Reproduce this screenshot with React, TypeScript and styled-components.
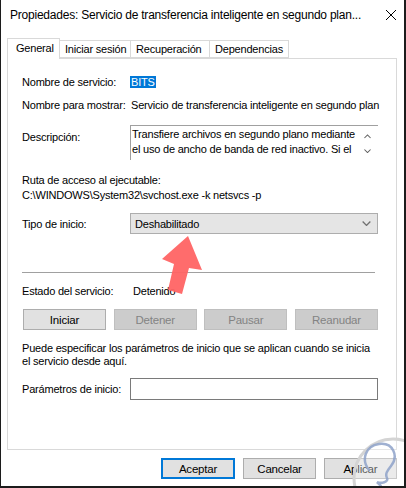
import React from "react";
import styled, { createGlobalStyle } from "styled-components";

const Global = createGlobalStyle`
  html, body { margin: 0; padding: 0; background: #fff; }
  * { box-sizing: border-box; }
`;

const Win = styled.div`
  position: relative;
  width: 406px;
  height: 488px;
  background: #fff;
  border-left: 1px solid #1c1c1c;
  border-right: 2px solid #1c1c1c;
  border-bottom: 2px solid #1c1c1c;
  font-family: "Liberation Sans", Arial, sans-serif;
  font-size: 11px;
  letter-spacing: -0.2px;
  color: #000;
  overflow: hidden;
  display: flex;
  flex-direction: column;
`;

const TitleBar = styled.div`
  height: 38px;
  display: flex;
  align-items: flex-start;
  padding: 8px 0 0 9px;
`;

const TitleText = styled.div`
  width: 375px;
  flex: none;
  font-size: 12px;
  letter-spacing: -0.22px;
  line-height: 14px;
  white-space: nowrap;
  overflow: hidden;
`;

const Close = styled.div`
  flex: none;
  width: 12px;
  height: 12px;
  margin-top: 1px;
`;

const TabStrip = styled.div`
  display: flex;
  align-items: flex-end;
  height: 20px;
  margin-left: 6px;
  position: relative;
  z-index: 2;
`;

const Tab = styled.div<{ $w: number; $active?: boolean }>`
  width: ${(p) => p.$w}px;
  height: ${(p) => (p.$active ? 21 : 18)}px;
  margin-bottom: ${(p) => (p.$active ? -1 : 0)}px;
  margin-left: ${(p) => (p.$active ? 0 : -1)}px;
  border: 1px solid #d9d9d9;
  border-bottom: ${(p) => (p.$active ? "none" : "1px solid #d9d9d9")};
  background: #fff;
  display: flex;
  align-items: ${(p) => (p.$active ? "flex-start" : "center")};
  padding: ${(p) => (p.$active ? "3px 0 0 8px" : "0 0 0 5px")};
  line-height: 13px;
  white-space: nowrap;
  z-index: ${(p) => (p.$active ? 2 : 1)};
`;

const Panel = styled.div`
  margin: 0 7px 0 6px;
  height: 392px;
  border: 1px solid #d9d9d9;
  padding: 16px 18px 0 14px;
  display: flex;
  flex-direction: column;
`;

const Row = styled.div<{ $mt: number; $h?: number; $align?: string }>`
  display: flex;
  align-items: ${(p) => p.$align || "center"};
  margin-top: ${(p) => p.$mt}px;
  ${(p) => (p.$h ? `height: ${p.$h}px;` : "")}
  line-height: 14px;
  white-space: nowrap;
`;

const Label = styled.div<{ $pt?: number }>`
  width: 108px;
  flex: none;
  ${(p) => (p.$pt ? `padding-top: ${p.$pt}px;` : "")}
`;

const Value = styled.div<{ $ml?: number }>`
  margin-left: ${(p) => p.$ml || 1}px;
`;

const Selected = styled.span`
  background: #0078d7;
  color: #fff;
  padding: 0 1px;
  margin-left: -1px;
`;

const TextBox = styled.div`
  position: relative;
  width: 248px;
  height: 35px;
  border-top: 1px solid #a0a0a0;
  border-left: 1px solid #a0a0a0;
  padding: 1px 0 0 1px;
  line-height: 15px;
`;

const ScrollArrows = styled.div`
  position: absolute;
  right: 7px;
  top: 8px;
  display: flex;
  flex-direction: column;
  gap: 10px;
`;

const Combo = styled.div`
  width: 248px;
  height: 21px;
  background: #e5e5e5;
  border: 1px solid #adadad;
  display: flex;
  align-items: center;
  justify-content: space-between;
  padding: 0 6px 0 4px;
`;

const Sep = styled.div`
  margin-top: 38px;
  height: 1px;
  background: #a0a0a0;
  width: 353px;
`;

const Buttons = styled.div`
  display: flex;
  justify-content: space-between;
  margin: 11px 0 0 1px;
`;

const Btn = styled.div<{ $disabled?: boolean; $w?: number; $default?: boolean }>`
  width: ${(p) => p.$w || 83}px;
  height: 21px;
  display: flex;
  align-items: center;
  justify-content: center;
  background: ${(p) => (p.$disabled ? "#cccccc" : "#e1e1e1")};
  border: ${(p) => (p.$default ? "2px solid #0078d7" : p.$disabled ? "1px solid #bfbfbf" : "1px solid #adadad")};
  color: ${(p) => (p.$disabled ? "#838383" : "#000")};
  font-size: 11.5px;
`;

const Para = styled.div`
  margin-top: 12px;
  line-height: 13px;
  white-space: nowrap;
`;

const Input = styled.div`
  width: 248px;
  height: 22px;
  border: 1px solid #7a7a7a;
  background: #fff;
`;

const Footer = styled.div`
  display: flex;
  justify-content: flex-end;
  gap: 8px;
  margin: 8px 7px 0 0;
`;

const Overlay = styled.svg`
  position: absolute;
  left: 0;
  top: 0;
  pointer-events: none;
`;

const Chevron = ({ up, color, w = 8 }: { up?: boolean; color: string; w?: number }) => (
  <svg width={w} height={w / 2 + 1} viewBox="0 0 8 5" style={{ display: "block" }}>
    <path d={up ? "M0.5 4.5 L4 1 L7.5 4.5" : "M0.5 0.5 L4 4 L7.5 0.5"} fill="none" stroke={color} strokeWidth="1.2" />
  </svg>
);

export default function App() {
  return (
    <>
      <Global />
      <Win>
        <TitleBar>
          <TitleText>Propiedades: Servicio de transferencia inteligente en segundo plan...</TitleText>
          <Close>
            <svg width="12" height="12" viewBox="0 0 12 12" style={{ display: "block" }}>
              <path d="M1 1 L11 11 M11 1 L1 11" stroke="#000" strokeWidth="1" />
            </svg>
          </Close>
        </TitleBar>
        <TabStrip>
          <Tab $w={53} $active>General</Tab>
          <Tab $w={72}>Iniciar sesión</Tab>
          <Tab $w={80}>Recuperación</Tab>
          <Tab $w={80}>Dependencias</Tab>
        </TabStrip>
        <Panel>
          <Row $mt={0} $h={14}>
            <Label>Nombre de servicio:</Label>
            <Value><Selected>BITS</Selected></Value>
          </Row>
          <Row $mt={9} $h={14}>
            <Label>Nombre para mostrar:</Label>
            <Value>Servicio de transferencia inteligente en segundo plan</Value>
          </Row>
          <Row $mt={13} $align="flex-start">
            <Label $pt={5}>Descripción:</Label>
            <TextBox>
              Transfiere archivos en segundo plano mediante
              <br />
              el uso de ancho de banda de red inactivo. Si el
              <ScrollArrows>
                <Chevron up color="#606060" w={7} />
                <Chevron color="#606060" w={7} />
              </ScrollArrows>
            </TextBox>
          </Row>
          <Row $mt={13} $h={14}>Ruta de acceso al ejecutable:</Row>
          <Row $mt={1} $h={14}>C:\WINDOWS\System32\svchost.exe -k netsvcs -p</Row>
          <Row $mt={11}>
            <Label>Tipo de inicio:</Label>
            <Combo>
              <span>Deshabilitado</span>
              <Chevron color="#707070" w={9} />
            </Combo>
          </Row>
          <Sep />
          <Row $mt={11} $h={14}>
            <Label>Estado del servicio:</Label>
            <Value $ml={3}>Detenido</Value>
          </Row>
          <Buttons>
            <Btn>Iniciar</Btn>
            <Btn $disabled>Detener</Btn>
            <Btn $disabled>Pausar</Btn>
            <Btn $disabled>Reanudar</Btn>
          </Buttons>
          <Para>
            Puede especificar los parámetros de inicio que se aplican cuando se inicia
            <br />
            el servicio desde aquí.
          </Para>
          <Row $mt={10}>
            <Label>Parámetros de inicio:</Label>
            <Input />
          </Row>
        </Panel>
        <Footer>
          <Btn $w={74} $default>Aceptar</Btn>
          <Btn $w={73}>Cancelar</Btn>
          <Btn $w={73}>Aplicar</Btn>
        </Footer>
        <Overlay width="406" height="488" viewBox="0 0 406 488">
          <polygon
            points="187,236 201,270 188,268 181,294 167,290 173,264 161,259"
            fill="#ff6464"
            opacity="0.95"
          />
          <circle cx="392" cy="478" r="39" fill="rgba(255,255,255,0.35)" stroke="#d4d4d4" strokeWidth="3" />
          <path
            d="M368 470 C360 460 364 446 378 444 C392 442 398 456 390 466 C386 471 384 474 386 478 C388 482 380 484 376 482 C380 486 384 488 374 490"
            fill="none"
            stroke="#8ea2c9"
            strokeWidth="2.5"
            strokeLinecap="round"
            opacity="0.85"
          />
        </Overlay>
      </Win>
    </>
  );
}
